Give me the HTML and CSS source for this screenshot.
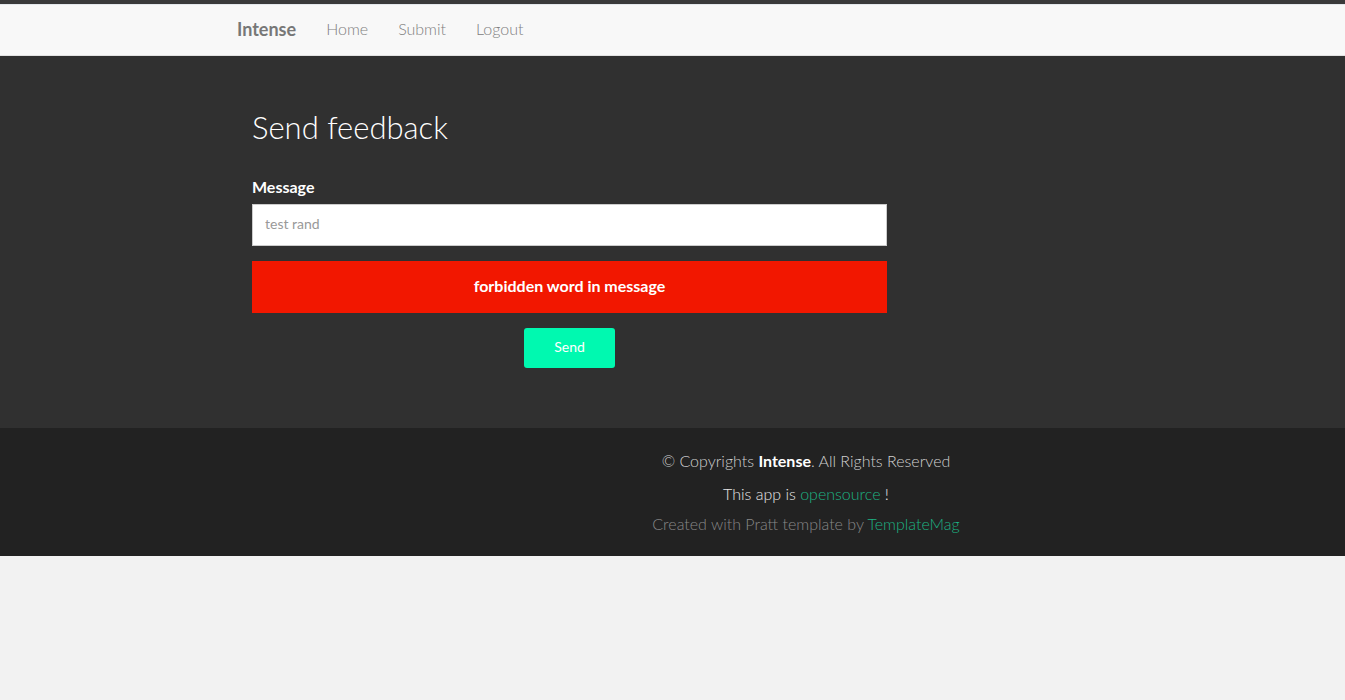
FILE: index.html
```html
<!DOCTYPE html>
<html lang="en">
<head>
<meta charset="utf-8">
<title>Intense - Send feedback</title>
<link rel="stylesheet" href="styles.css">
</head>
<body>
<div class="topline"></div>
<nav class="navbar">
  <div class="container nav-inner">
    <a class="brand" href="#">Intense</a>
    <a class="nav-link" href="#">Home</a>
    <a class="nav-link" href="#">Submit</a>
    <a class="nav-link" href="#">Logout</a>
  </div>
</nav>
<section class="main">
  <div class="container">
    <div class="form-col">
      <h1 class="title">Send feedback</h1>
      <form class="form">
        <label class="label" for="msg">Message</label>
        <input class="input" id="msg" type="text" placeholder="test rand">
        <div class="alert">forbidden word in message</div>
        <div class="actions"><button class="btn" type="button">Send</button></div>
      </form>
    </div>
  </div>
</section>
<footer class="footer">
  <div class="container">
    <div class="footer-col">
      <p class="copy">© Copyrights <b>Intense</b>. All Rights Reserved</p>
      <p class="app">This app is <a href="#">opensource</a> !</p>
      <p class="credit">Created with Pratt template by <a href="#">TemplateMag</a></p>
    </div>
  </div>
</footer>
</body>
</html>
```
FILE: styles.css
```css
* { box-sizing: border-box; }
html, body { margin: 0; padding: 0; }
body {
  background: #f2f2f2;
  font-family: "Lato", "Liberation Sans", sans-serif;
  font-size: 14px;
  color: #333;
}
a { text-decoration: none; }
.container { width: 901px; margin: 0 auto; }

.topline { height: 4px; background: #3a3a3a; }
.navbar {
  background: #f8f8f8;
  border-top: 1px solid #e4e8ec;
  border-bottom: 1px solid #e2e2e2;
  height: 52px;
}
.nav-inner { display: flex; align-items: center; height: 47px; }
.brand {
  padding: 0 15px;
  font-size: 18px;
  font-weight: 700;
  color: #777;
}
.nav-link {
  padding: 0 15px;
  font-size: 16px;
  font-weight: 300;
  color: #808080;
}

.main { background: #303030; padding: 55px 0 60px; }
.form-col { width: 665px; padding-left: 30px; }
.title {
  margin: 0 0 32px;
  font-family: "Lato", sans-serif;
  font-weight: 300;
  font-size: 31px;
  line-height: 33px;
  color: #fff;
}
.form { display: flex; flex-direction: column; }
.label {
  font-size: 16px;
  font-weight: 700;
  color: #fff;
  line-height: 21px;
  margin-bottom: 7px;
}
.input {
  height: 42px;
  border: 1px solid #ccc;
  background: #fff;
  padding: 0 12px 3px;
  font-family: "Lato", sans-serif;
  font-size: 14px;
  color: #555;
  outline: none;
}
.input::placeholder { color: #999; }
.alert {
  margin-top: 15px;
  height: 52px;
  padding-bottom: 4px;
  background: #f21700;
  color: #fff;
  font-weight: 700;
  font-size: 16px;
  display: flex;
  align-items: center;
  justify-content: center;
}
.actions { margin-top: 15px; display: flex; justify-content: center; }
.btn {
  width: 91px;
  height: 40px;
  padding: 0 0 4px;
  border: 0;
  border-radius: 3px;
  background: #00f9b0;
  color: #fff;
  font-family: "Lato", sans-serif;
  font-size: 14px;
}

.footer { background: #222; padding: 22px 0 21px; }
.footer-col { width: 630px; margin-left: 269px; text-align: center; }
.footer p { margin: 0; font-size: 16px; line-height: 22px; font-weight: 300; }
.copy { color: #d0d0d0; }
.copy b { color: #fff; font-weight: 700; }
.app { margin-top: 11px !important; color: #e6e6e6; }
.credit { margin-top: 8px !important; color: #888; }
.footer a { color: #1db283; }
```
